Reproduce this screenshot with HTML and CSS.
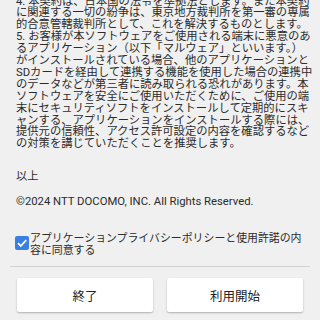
FILE: index.html
```html
<!DOCTYPE html>
<html lang="ja">
<head>
<meta charset="utf-8">
<link rel="stylesheet" href="styles.css">
</head>
<body>
<div class="screen">
  <div class="content">
    <p class="terms">4. 本契約は、日本国の法令を準拠法とします。また本契約<br>に関連する一切の紛争は、東京地方裁判所を第一審の専属<br>的合意管轄裁判所として、これを解決するものとします。<br>5. お客様が本ソフトウェアをご使用される端末に悪意のあ<br>るアプリケーション（以下「マルウェア」といいます。）<br>がインストールされている場合、他のアプリケーションと<br>SDカードを経由して連携する機能を使用した場合の連携中<br>のデータなどが第三者に読み取られる恐れがあります。本<br>ソフトウェアを安全にご使用いただくために、ご使用の端<br>末にセキュリティソフトをインストールして定期的にスキ<br>ャンする、アプリケーションをインストールする際には、<br>提供元の信頼性、アクセス許可設定の内容を確認するなど<br>の対策を講じていただくことを推奨します。</p>
    <p class="end">以上</p>
    <p class="copy">©2024 NTT DOCOMO, INC. All Rights Reserved.</p>
  </div>
  <label class="agree">
    <span class="box"><svg viewBox="0 0 14 14" width="14" height="14"><path d="M3 7.2 L5.8 10 L11.2 4.2" fill="none" stroke="#fff" stroke-width="1.8"/></svg></span>
    <span class="agree-text">アプリケーションプライバシーポリシーと使用許諾の内<br>容に同意する</span>
  </label>
  <div class="divider"></div>
  <div class="actions">
    <button class="btn">終了</button>
    <button class="btn">利用開始</button>
  </div>
</div>
</body>
</html>
```

FILE: styles.css
```css
html, body {
  margin: 0;
  padding: 0;
  background: #f0f0f0;
}
body {
  width: 320px;
  height: 320px;
  overflow: hidden;
  font-family: Roboto, "Noto Sans CJK JP", sans-serif;
  color: #2b2b2b;
}
.screen {
  display: flex;
  flex-direction: column;
}
.content {
  margin-top: -4.5px;
  padding: 0 0 0 16px;
  font-size: 11.3px;
  line-height: 11.9px;
}
.content p {
  margin: 0;
  white-space: nowrap;
}
.end {
  padding-top: 21px;
}
.copy {
  padding-top: 13px;
}
.agree {
  display: flex;
  align-items: flex-start;
  gap: 1px;
  margin-top: 25px;
  padding-left: 15px;
  font-size: 10.9px;
  line-height: 12px;
}
.box {
  flex: none;
  width: 14px;
  height: 14px;
  margin-top: 3px;
  background: #3b7fe3;
  border-radius: 2px;
  display: flex;
}
.agree-text {
  white-space: nowrap;
}
.divider {
  height: 1px;
  background: #d2d2d2;
  margin: 9px 10px 0 10px;
}
.actions {
  display: flex;
  gap: 14px;
  padding: 11px 17px 0 17px;
}
.btn {
  flex: 1;
  height: 34px;
  border: none;
  border-radius: 2px;
  background: #ffffff;
  box-shadow: 0 1px 2px rgba(0,0,0,0.28);
  font-family: Roboto, "Noto Sans CJK JP", sans-serif;
  font-size: 12.5px;
  color: #222;
  padding: 0;
}
```
